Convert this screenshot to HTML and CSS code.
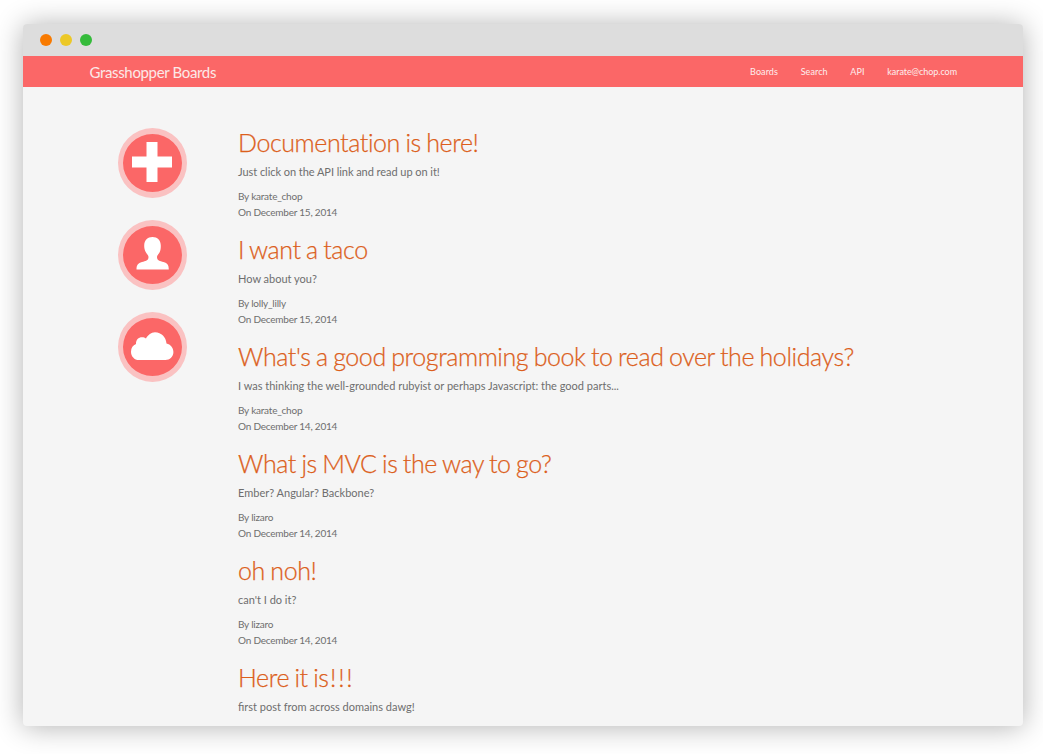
FILE: index.html
```html
<!DOCTYPE html>
<html lang="en">
<head>
<meta charset="utf-8">
<title>Grasshopper Boards</title>
<link rel="stylesheet" href="styles.css">
</head>
<body>
<div class="window">
  <div class="titlebar"><span class="dot orange"></span><span class="dot yellow"></span><span class="dot green"></span></div>
  <header class="navbar">
    <a class="brand">Grasshopper Boards</a>
    <nav class="links"><a>Boards</a><a>Search</a><a>API</a><a class="email">karate@chop.com</a></nav>
  </header>
  <main class="content">
    <aside class="actions">
      <a class="action"><svg viewBox="0 0 69 70"><path d="M28.500 14h11v14.500h14.500v11H39.500V54h-11V39.500H14v-11h14.500z"/></svg></a>
      <a class="action"><svg viewBox="0 0 69 70"><path d="M34.500 17c5 0 8.500 3.300 8.300 9.200 0 2.500-.4 4.600-1.300 6.200-1 1.800-2.500 3-2.500 4.800 0 3.300 3 3.700 6.500 4.800 4 1.200 5.300 3 5.300 7.500H18.500c0-4.500 1.500-6.300 5.500-7.500 3.500-1.100 6.500-1.500 6.500-4.800 0-1.800-1.500-3-2.500-4.800-.9-1.600-1.800-3.700-1.800-6.200-.2-5.900 3.300-9.200 8.300-9.200z"/></svg></a>
      <a class="action"><svg viewBox="0 0 69 70"><path d="M21 48c-4.700 0-8-3.700-8-8.300 0-3.700 2-6.600 5-7.700-.2-4 2.500-6.700 6-6.700 1.600 0 2.900.5 4 1.300 1.600-3.200 5-6.300 9-6.300 6.500 0 11 5 11.500 11.200 4 .9 6.900 4.300 6.900 8.500 0 4.500-3.500 8-8 8z"/></svg></a>
    </aside>
    <section class="posts">
      <article class="post"><h2>Documentation is here!</h2><p class="tight">Just click on the API link and read up on it!</p><div class="meta">By karate_chop<br>On December 15, 2014</div></article>
      <article class="post"><h2>I want a taco</h2><p>How about you?</p><div class="meta">By lolly_lilly<br>On December 15, 2014</div></article>
      <article class="post"><h2>What's a good programming book to read over the holidays?</h2><p>I was thinking the well-grounded rubyist or perhaps Javascript: the good parts...</p><div class="meta">By karate_chop<br>On December 14, 2014</div></article>
      <article class="post"><h2>What js MVC is the way to go?</h2><p>Ember? Angular? Backbone?</p><div class="meta">By lizaro<br>On December 14, 2014</div></article>
      <article class="post"><h2>oh noh!</h2><p>can't I do it?</p><div class="meta">By lizaro<br>On December 14, 2014</div></article>
      <article class="post"><h2>Here it is<span class="bangs">!!!</span></h2><p>first post from across domains dawg!</p></article>
    </section>
  </main>
</div>
</body>
</html>
```
FILE: styles.css
```css
* { box-sizing: border-box; }
html { overflow: hidden; }
body { margin: 0; padding: 24px 20px 28px 23px; background: #fff; font-family: Lato, sans-serif; }
.window { width: 1000px; height: 702px; overflow: hidden; border-radius: 4px; background: #f5f5f5; box-shadow: 0 1px 28px rgba(0, 0, 0, .31); }
.titlebar { height: 32px; padding-left: 17px; background: #ddd; display: flex; align-items: center; gap: 8px; }
.dot { width: 12px; height: 12px; border-radius: 50%; }
.orange { background: #f87a00; }
.yellow { background: #ecc827; }
.green { background: #35bb3b; }
.navbar { height: 31px; padding: 0 66px; background: #fb6767; color: #fbe9e7; display: flex; align-items: center; justify-content: space-between; }
.brand { font-size: 15px; letter-spacing: -.35px; padding-left: .5px; }
.links { display: flex; gap: 22.700px; font-size: 9px; color: #fdeeee; letter-spacing: .08px; }
.email { letter-spacing: -.05px; }
.content { display: flex; padding: 41px 0 0 95px; }
.actions { width: 120px; display: flex; flex-direction: column; gap: 22px; }
.action { width: 69px; height: 70px; border-radius: 50%; border: 6px solid #fac2c2; border-width: 6px 5px; background: #fb6767; display: flex; align-items: center; justify-content: center; }
.action svg { width: 69px; height: 70px; flex: none; fill: #fff; }
.post { height: 107px; }
h2 { margin: 0 0 5px; font-size: 25px; line-height: 29px; font-weight: 300; letter-spacing: -.42px; word-spacing: -.9px; color: #dc5f1c; -webkit-text-stroke: .25px #dc5f1c; white-space: nowrap; }
.bangs { letter-spacing: 1.700px; margin-left: 1.500px; }
p { margin: 0 0 6px; font-size: 11px; line-height: 20px; color: #6e6e6e; }
.tight { letter-spacing: -.05px; }
.meta { font-size: 10px; line-height: 16px; letter-spacing: -.22px; color: #6e6e6e; }
```
